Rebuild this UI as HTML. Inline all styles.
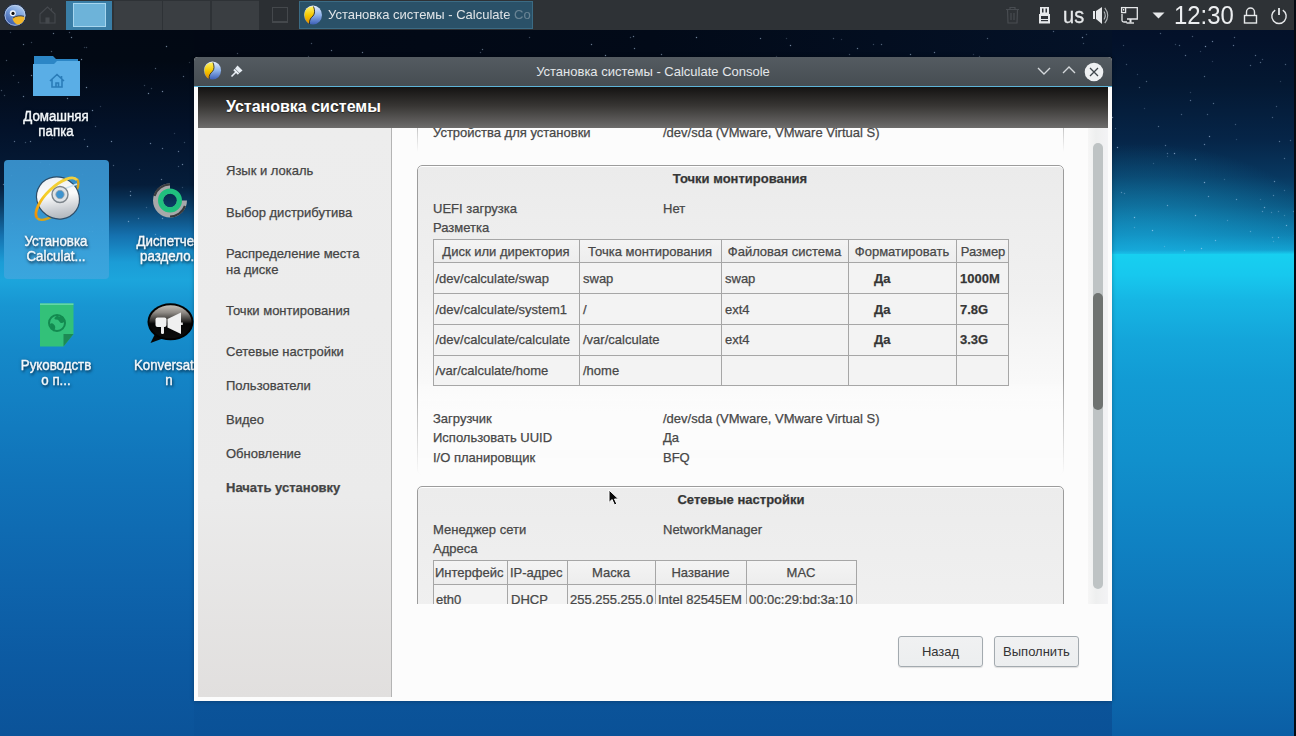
<!DOCTYPE html>
<html><head><meta charset="utf-8">
<style>
*{margin:0;padding:0;box-sizing:border-box}
html,body{width:1296px;height:736px;overflow:hidden;font-family:"Liberation Sans",sans-serif}
body{position:relative;background:#0a4f96}
.abs{position:absolute}
#bg{position:absolute;left:0;top:0;width:1296px;height:736px;
background:linear-gradient(to bottom,#01050c 0px,#02070f 57px,#041832 85px,#062548 140px,#083860 177px,#0b5580 206px,#0e7eae 235px,#12a0cf 250px,#17d0f0 254px,#16c6ed 285px,#13afe0 320px,#119dd6 360px,#1090cf 400px,#0f85c6 460px,#0c6cb2 520px,#0b5ca2 620px,#0b559b 680px,#0a5197 736px)}
#bgL{position:absolute;left:0;top:0;width:194px;height:736px;
background:linear-gradient(to bottom,#020814 0px,#020914 60px,#03122a 130px,#051d3a 185px,#0a3a62 205px,#1572b0 236px,#1b9cd6 262px,#1ca5dc 280px,#1896d2 305px,#1589c9 350px,#1380c3 400px,#1072b8 480px,#0e64ac 580px,#0c5aa2 660px,#0b5399 736px)}
#bgR{position:absolute;left:1112px;top:0;width:184px;height:736px;
background:linear-gradient(to bottom,#030f26 0px,#03112a 40px,#041832 85px,#062548 140px,#083860 177px,#0b5580 206px,#0e7eae 235px,#12a0cf 250px,#17d0f0 254px,#17c8ee 275px,#16b6e4 300px,#14a5da 340px,#129bd4 380px,#1190cc 460px,#0f82c3 540px,#0e74b8 620px,#0c68ad 690px,#0b5ea5 736px)}
#glowR{position:absolute;left:1112px;top:120px;width:184px;height:134px;background:radial-gradient(ellipse 190px 110px at 30px 134px,rgba(25,175,225,.55),rgba(25,175,225,0))}
#taskbar{position:absolute;left:0;top:0;width:1294px;height:30px;background:#2e3236}
.desk{position:absolute;top:1px;height:29px;background:#3a3e42}
.icontext{position:absolute;color:#f4f8fb;font-size:14px;-webkit-text-stroke:0.4px #f4f8fb;text-align:center;line-height:15px;transform:scaleX(0.95);text-shadow:1px 2px 3px rgba(0,20,40,.85),0 0 4px rgba(0,0,0,.35)}
#win{position:absolute;left:194px;top:57px;width:918px;height:644px;background:#fcfcfc;border-radius:4px 4px 0 0;box-shadow:0 0 4px rgba(0,0,0,.3)}
#title{position:absolute;left:0;top:0;width:918px;height:30px;background:linear-gradient(#545b61,#464d52);border-radius:4px 4px 0 0;border-bottom:1px solid #5eb4d8}
#title .t{position:absolute;left:0;width:918px;top:7px;text-align:center;color:#e4e7ea;font-size:13px}
#hdr{position:absolute;left:4px;top:30px;width:910px;height:41px;background:linear-gradient(#141312,#373533 45%,#6d6c6b)}
#hdr .t{position:absolute;left:28px;top:11px;color:#fff;font-size:16px;font-weight:bold;text-shadow:0 1px 1px rgba(0,0,0,.5)}
#side{position:absolute;left:4px;top:71px;width:194px;height:569px;background:linear-gradient(#ededed,#ebebeb 65%,#e1dfde);border-right:1px solid #b4b4b4}
.nav{position:absolute;left:28px;font-size:13px;color:#444;-webkit-text-stroke:0.25px #444;margin-top:1px}
#content{position:absolute;left:198px;top:71px;width:696px;height:476px;overflow:hidden;background:#fcfcfc}
#sbar{position:absolute;left:894px;top:71px;width:20px;height:476px;background:linear-gradient(to right,#f6f6f6,#eeefef 40%,#f3f3f5)}
#sbar .track{position:absolute;left:5px;top:15px;width:10px;height:446px;border-radius:5px;background:#bec3c4}
#sbar .handle{position:absolute;left:5px;top:165px;width:10px;height:117px;border-radius:5px;background:#6f7371}
.lbl{position:absolute;font-size:13px;color:#474747;-webkit-text-stroke:0.25px #474747;white-space:nowrap;line-height:15px}
.grp{position:absolute;border:1px solid #9c9c9c;border-radius:5px;box-shadow:inset 0 1px 0 #fff;background:linear-gradient(#ececec,#efefef 50%,#f3f3f3)}
.g1{background:linear-gradient(#ebebeb,#f0f0f0 40%,#fcfcfc 80%);-webkit-mask-image:linear-gradient(#000 68%,rgba(0,0,0,0) 100%)}
.btn{position:absolute;height:31px;border:1px solid #a3aaaf;border-radius:3px;background:linear-gradient(#f0f1f2,#eceeef);font-size:13px;color:#333;text-align:center;line-height:29px;box-shadow:0 1px 1px rgba(0,0,0,.12)}
</style></head><body>
<div id="bg"></div>
<div id="bgL"></div>
<div id="bgR"></div>
<div id="glowR"></div>
<div class="abs" style="left:194px;top:30px;width:918px;height:27px;background:linear-gradient(to right,#020814,#020a18 50%,#041228)"></div>
<div class="abs" style="left:0;top:0;width:1px;height:1px;box-shadow:29px 167px 1px 0 rgba(200,225,255,0.34),1179px 45px 1px 0 rgba(200,225,255,0.60),84px 47px 1px 0 rgba(200,225,255,0.35),1262px 59px 1px 0 rgba(200,225,255,0.43),1284px 158px 1px 0 rgba(200,225,255,0.54),237px 53px 1px 0 rgba(200,225,255,0.47),23px 96px 1px 0 rgba(200,225,255,0.79),113px 165px 1px 0 rgba(200,225,255,0.52),1123px 45px 1px 0 rgba(200,225,255,0.42),1190px 100px 1px 0 rgba(200,225,255,0.65),1167px 205px 1px 0 rgba(200,225,255,0.72),111px 141px 1px 0 rgba(200,225,255,0.83),1164px 246px 1px 0 rgba(200,225,255,0.37),1250px 65px 1px 0 rgba(200,225,255,0.59),130px 191px 1px 0 rgba(200,225,255,0.64),482px 49px 1px 0 rgba(200,225,255,0.66),1195px 215px 1px 0 rgba(200,225,255,0.87),1233px 45px 1px 0 rgba(200,225,255,0.72),1293px 211px 1px 0 rgba(200,225,255,0.47),1234px 37px 1px 0 rgba(200,225,255,0.58),23px 44px 1px 0 rgba(200,225,255,0.76),48px 113px 1px 0 rgba(200,225,255,0.82),87px 146px 1px 0 rgba(200,225,255,0.83),987px 38px 1px 0 rgba(200,225,255,0.55),1273px 241px 1px 0 rgba(200,225,255,0.39),45px 81px 1px 0 rgba(200,225,255,0.59),1160px 33px 1px 0 rgba(200,225,255,0.55),1215px 240px 1px 0 rgba(200,225,255,0.71),1224px 179px 1px 0 rgba(200,225,255,0.33),910px 54px 1px 0 rgba(200,225,255,0.78),1185px 55px 1px 0 rgba(200,225,255,0.68),13px 75px 1px 0 rgba(200,225,255,0.40),10px 32px 1px 0 rgba(200,225,255,0.39),71px 37px 1px 0 rgba(200,225,255,0.82),1139px 87px 1px 0 rgba(200,225,255,0.51),1134px 217px 1px 0 rgba(200,225,255,0.90),1200px 51px 1px 0 rgba(200,225,255,0.36),51px 204px 1px 0 rgba(200,225,255,0.40),184px 142px 1px 0 rgba(200,225,255,0.39),1117px 147px 1px 0 rgba(200,225,255,0.89),833px 38px 1px 0 rgba(200,225,255,0.52),150px 143px 1px 0 rgba(200,225,255,0.77),43px 201px 1px 0 rgba(200,225,255,0.89),934px 52px 1px 0 rgba(200,225,255,0.74),100px 106px 1px 0 rgba(200,225,255,0.32),54px 86px 1px 0 rgba(200,225,255,0.72),605px 55px 1px 0 rgba(200,225,255,0.89),529px 37px 1px 0 rgba(200,225,255,0.44),40px 162px 1px 0 rgba(200,225,255,0.84),634px 48px 1px 0 rgba(200,225,255,0.78),128px 221px 1px 0 rgba(200,225,255,0.77),633px 36px 1px 0 rgba(200,225,255,0.77),155px 234px 1px 0 rgba(200,225,255,0.54),1284px 190px 1px 0 rgba(200,225,255,0.40),29px 220px 1px 0 rgba(200,225,255,0.78),160px 236px 1px 0 rgba(200,225,255,0.69),1212px 61px 1px 0 rgba(200,225,255,0.31),790px 45px 1px 0 rgba(200,225,255,0.86),1271px 212px 1px 0 rgba(200,225,255,0.43),57px 82px 1px 0 rgba(200,225,255,0.65),81px 59px 1px 0 rgba(200,225,255,0.85),1195px 159px 1px 0 rgba(200,225,255,0.84),1279px 141px 1px 0 rgba(200,225,255,0.62),1115px 128px 1px 0 rgba(200,225,255,0.41),155px 68px 1px 0 rgba(200,225,255,0.58),1213px 103px 1px 0 rgba(200,225,255,0.61),1255px 55px 1px 0 rgba(200,225,255,0.64),54px 193px 1px 0 rgba(200,225,255,0.60),1250px 231px 1px 0 rgba(200,225,255,0.57),1204px 144px 1px 0 rgba(200,225,255,0.72),1209px 136px 1px 0 rgba(200,225,255,0.86),1272px 237px 1px 0 rgba(200,225,255,0.46),1284px 215px 1px 0 rgba(200,225,255,0.38),86px 47px 1px 0 rgba(200,225,255,0.44),130px 195px 1px 0 rgba(200,225,255,0.84),139px 169px 1px 0 rgba(200,225,255,0.39),1082px 37px 1px 0 rgba(200,225,255,0.87),1201px 248px 1px 0 rgba(200,225,255,0.80),84px 139px 1px 0 rgba(200,225,255,0.50),62px 182px 1px 0 rgba(200,225,255,0.31),1192px 36px 1px 0 rgba(200,225,255,0.50),1205px 46px 1px 0 rgba(200,225,255,0.89),1086px 34px 1px 0 rgba(200,225,255,0.46),151px 88px 1px 0 rgba(200,225,255,0.38),1278px 211px 1px 0 rgba(200,225,255,0.46),178px 151px 1px 0 rgba(200,225,255,0.72),11px 175px 1px 0 rgba(200,225,255,0.56),182px 164px 1px 0 rgba(200,225,255,0.78),166px 46px 1px 0 rgba(200,225,255,0.82),1174px 153px 1px 0 rgba(200,225,255,0.86),25px 142px 1px 0 rgba(200,225,255,0.44),31px 42px 1px 0 rgba(200,225,255,0.42),59px 190px 1px 0 rgba(200,225,255,0.47),1144px 108px 1px 0 rgba(200,225,255,0.31),3px 184px 1px 0 rgba(200,225,255,0.63),92px 226px 1px 0 rgba(200,225,255,0.36),591px 44px 1px 0 rgba(200,225,255,0.80),1204px 182px 1px 0 rgba(200,225,255,0.89),161px 179px 1px 0 rgba(200,225,255,0.68),1175px 44px 1px 0 rgba(200,225,255,0.38),144px 85px 1px 0 rgba(200,225,255,0.40),163px 213px 1px 0 rgba(200,225,255,0.70),47px 93px 1px 0 rgba(200,225,255,0.58),86px 87px 1px 0 rgba(200,225,255,0.88),696px 37px 1px 0 rgba(200,225,255,0.88),69px 32px 1px 0 rgba(200,225,255,0.53),1204px 76px 1px 0 rgba(200,225,255,0.60),51px 51px 1px 0 rgba(200,225,255,0.54),4px 95px 1px 0 rgba(200,225,255,0.44),1208px 196px 1px 0 rgba(200,225,255,0.69),1272px 117px 1px 0 rgba(200,225,255,0.50),331px 50px 1px 0 rgba(200,225,255,0.69),162px 218px 1px 0 rgba(200,225,255,0.68),1260px 62px 1px 0 rgba(200,225,255,0.61),1264px 207px 1px 0 rgba(200,225,255,0.80),1274px 181px 1px 0 rgba(200,225,255,0.72),6px 60px 1px 0 rgba(200,225,255,0.52),162px 148px 1px 0 rgba(200,225,255,0.68),1236px 139px 1px 0 rgba(200,225,255,0.30),881px 44px 1px 0 rgba(200,225,255,0.62),1124px 193px 1px 0 rgba(200,225,255,0.45),52px 184px 1px 0 rgba(200,225,255,0.42),1290px 140px 1px 0 rgba(200,225,255,0.53),1236px 199px 1px 0 rgba(200,225,255,0.67),1126px 64px 1px 0 rgba(200,225,255,0.45),1167px 156px 1px 0 rgba(200,225,255,0.31),52px 172px 1px 0 rgba(200,225,255,0.72),1165px 145px 1px 0 rgba(200,225,255,0.58),1134px 227px 1px 0 rgba(200,225,255,0.42),1053px 31px 1px 0 rgba(200,225,255,0.58),1083px 43px 1px 0 rgba(200,225,255,0.46),183px 76px 1px 0 rgba(200,225,255,0.65),102px 230px 1px 0 rgba(200,225,255,0.38),661px 54px 1px 0 rgba(200,225,255,0.72),174px 133px 1px 0 rgba(200,225,255,0.31),95px 126px 1px 0 rgba(200,225,255,0.48),67px 98px 1px 0 rgba(200,225,255,0.80),146px 207px 1px 0 rgba(200,225,255,0.37),849px 54px 1px 0 rgba(200,225,255,0.47),1184px 250px 1px 0 rgba(200,225,255,0.65),1190px 92px 1px 0 rgba(200,225,255,0.33),162px 91px 1px 0 rgba(200,225,255,0.86),52px 138px 1px 0 rgba(200,225,255,0.41),1286px 225px 1px 0 rgba(200,225,255,0.79),1278px 237px 1px 0 rgba(200,225,255,0.63),1121px 192px 1px 0 rgba(200,225,255,0.57),786px 38px 1px 0 rgba(200,225,255,0.33),311px 43px 1px 0 rgba(200,225,255,0.51),143px 235px 1px 0 rgba(200,225,255,0.46),1167px 153px 1px 0 rgba(200,225,255,0.54),31px 75px 1px 0 rgba(200,225,255,0.84),1152px 230px 1px 0 rgba(200,225,255,0.90),1137px 74px 1px 0 rgba(200,225,255,0.35),18px 82px 1px 0 rgba(200,225,255,0.46),1273px 195px 1px 0 rgba(200,225,255,0.55),1207px 114px 1px 0 rgba(200,225,255,0.50),54px 233px 1px 0 rgba(200,225,255,0.38),1227px 220px 1px 0 rgba(200,225,255,0.43),48px 115px 1px 0 rgba(200,225,255,0.57),973px 54px 1px 0 rgba(200,225,255,0.31),138px 218px 1px 0 rgba(200,225,255,0.58),1112px 117px 1px 0 rgba(200,225,255,0.86),979px 56px 1px 0 rgba(200,225,255,0.45),30px 141px 1px 0 rgba(200,225,255,0.71),857px 48px 1px 0 rgba(200,225,255,0.76),1212px 41px 1px 0 rgba(200,225,255,0.77),178px 166px 1px 0 rgba(200,225,255,0.48),49px 164px 1px 0 rgba(200,225,255,0.72),14px 141px 1px 0 rgba(200,225,255,0.65),1153px 163px 1px 0 rgba(200,225,255,0.31),89px 231px 1px 0 rgba(200,225,255,0.69),630px 37px 1px 0 rgba(200,225,255,0.45),841px 39px 1px 0 rgba(200,225,255,0.31),1235px 124px 1px 0 rgba(200,225,255,0.45),1280px 81px 1px 0 rgba(200,225,255,0.32),82px 174px 1px 0 rgba(200,225,255,0.42),873px 44px 1px 0 rgba(200,225,255,0.42),480px 52px 1px 0 rgba(200,225,255,0.44),148px 93px 1px 0 rgba(200,225,255,0.87),1146px 81px 1px 0 rgba(200,225,255,0.55),1285px 64px 1px 0 rgba(200,225,255,0.54),189px 62px 1px 0 rgba(200,225,255,0.33),76px 219px 1px 0 rgba(200,225,255,0.83),1294px 235px 1px 0 rgba(200,225,255,0.50),182px 187px 1px 0 rgba(200,225,255,0.32),1181px 114px 1px 0 rgba(200,225,255,0.50),1px 90px 1px 0 rgba(200,225,255,0.51),308px 56px 1px 0 rgba(200,225,255,0.42),1262px 211px 1px 0 rgba(200,225,255,0.56),92px 110px 1px 0 rgba(200,225,255,0.85),71px 219px 1px 0 rgba(200,225,255,0.32),1260px 199px 1px 0 rgba(200,225,255,0.32),12px 223px 1px 0 rgba(200,225,255,0.45),1276px 106px 1px 0 rgba(200,225,255,0.46),760px 38px 1px 0 rgba(200,225,255,0.73),53px 33px 1px 0 rgba(200,225,255,0.75),776px 56px 1px 0 rgba(200,225,255,0.31),92px 231px 1px 0 rgba(200,225,255,0.87),1158px 126px 1px 0 rgba(200,225,255,0.60),362px 52px 1px 0 rgba(200,225,255,0.74)"></div>

<div id="taskbar">
  <svg class="abs" style="left:3px;top:3px" width="24" height="25" viewBox="0 0 24 25">
   <defs><linearGradient id="lg" x1=".8" y1="0" x2=".2" y2="1"><stop offset="0" stop-color="#b9d4f4"/><stop offset=".5" stop-color="#6d95d6"/><stop offset="1" stop-color="#2f4f9e"/></linearGradient></defs>
   <circle cx="12" cy="12.3" r="11" fill="url(#lg)" stroke="#1c2a44" stroke-width="1"/>
   <circle cx="12" cy="12.3" r="10" fill="none" stroke="#c9d6ea" stroke-width=".7"/>
   <circle cx="9.8" cy="10.2" r="3" fill="#f4f6fa"/><circle cx="10" cy="10.4" r="1.6" fill="#0d0d0d"/>
   <path d="M9.5 15.5 C12 13 17 12.5 21.5 13.8 C22 17.5 19 21.5 14.5 21.5 C11.5 20.5 10 18 9.5 15.5Z" fill="#f0b52a"/>
   <path d="M10 15 C13 12.8 17 12.3 21 13.3" fill="none" stroke="#2a2a2a" stroke-width=".8"/>
  </svg>
  <svg class="abs" style="left:39px;top:6px" width="17" height="18" viewBox="0 0 17 18" fill="none" stroke="#45494e" stroke-width="1.1">
   <path d="M1 17 V8 L8.5 1 L16 8 V17 Z M12.5 4.5 V2"/><rect x="7" y="12" width="3" height="5" fill="#45494e"/>
  </svg>
  <div class="desk" style="left:66px;width:46px;background:#3a7ea6"><div class="abs" style="left:7px;top:2px;width:33px;height:24px;background:#6db3d9;border:1px solid #a6d6ef"></div></div>
  <div class="desk" style="left:114px;width:48px"></div>
  <div class="desk" style="left:163px;width:47px"></div>
  <div class="desk" style="left:212px;width:47px"></div>
  <div class="abs" style="left:259px;top:0px;width:40px;height:30px;background:#2b2f33"></div>
  <div class="abs" style="left:272px;top:7px;width:16px;height:16px;border:1px solid #44484c;border-bottom:2px solid #44484c"></div>
  <div class="abs" style="left:299px;top:1px;width:234px;height:28px;background:#2a5168;border:1px solid #3b6b84"></div>
  <svg class="abs" style="left:303px;top:5px" width="20" height="20" viewBox="0 0 20 20">
<defs><linearGradient id="cy303" x1="0" y1="0" x2="0" y2="1"><stop offset="0" stop-color="#fff36a"/><stop offset=".5" stop-color="#f5c800"/><stop offset="1" stop-color="#e08a00"/></linearGradient>
<linearGradient id="cb303" x1="0" y1="0" x2="0" y2="1"><stop offset="0" stop-color="#e8f0ff"/><stop offset=".5" stop-color="#8fb3ea"/><stop offset="1" stop-color="#3c5fb8"/></linearGradient></defs>
<ellipse cx="10" cy="10" rx="9" ry="9.5" fill="url(#cb303)"/>
<path d="M10.5 1.5 C5 1 1.5 5 1.5 10 C1.5 14 3.5 17.5 6.5 19 C6 15 8 12.5 10 11 C12 9 12 5 10.5 1.5Z" fill="url(#cy303)"/>
<path d="M10.5 1.5 C12 5 12 9 10 11 C8 12.5 6 15 6.5 19" fill="none" stroke="#2a2a20" stroke-width=".9"/>
</svg>
  <div class="abs" style="left:328px;top:7px;font-size:13px;color:#e1e5e8;white-space:nowrap;width:204px;overflow:hidden;-webkit-mask-image:linear-gradient(to right,#000 179px,rgba(0,0,0,.35) 186px)">Установка системы - Calculate Co</div>

  <svg class="abs" style="left:1005px;top:6px" width="15" height="18" viewBox="0 0 15 18" fill="none" stroke="#484c51" stroke-width="1.2">
   <path d="M1 3.5 H14 M5 3.5 V1.5 H10 V3.5 M2.5 3.5 L3 17 H12 L12.5 3.5 M6 7 V14 M9 7 V14"/>
  </svg>
  <svg class="abs" style="left:1038px;top:6px" width="13" height="18" viewBox="0 0 13 18">
   <rect x="2" y="1" width="9" height="7" fill="#e6e8ea"/><rect x="4" y="2.5" width="1.5" height="4" fill="#2f3338"/><rect x="7.5" y="2.5" width="1.5" height="4" fill="#2f3338"/>
   <rect x="1" y="8" width="11" height="9.5" fill="#e6e8ea"/><rect x="3" y="10" width="7" height="3" fill="#2f3338"/><rect x="3" y="14" width="7" height="1.2" fill="#2f3338"/>
  </svg>
  <div class="abs" style="left:1063px;top:3px;font-size:22px;color:#e6e8ea;-webkit-text-stroke:0.3px #e6e8ea;transform:scaleX(0.91);transform-origin:0 0">us</div>
  <svg class="abs" style="left:1092px;top:6px" width="18" height="19" viewBox="0 0 18 19">
   <rect x="1" y="5" width="2" height="8" fill="#e6e8ea"/><path d="M4 5 L10 1 V18 L4 13 Z" fill="#e6e8ea"/>
   <path d="M12 5.5 Q14.5 9.5 12 13.5" fill="none" stroke="#b8bcbf" stroke-width="1.1"/>
   <path d="M12.8 1.8 Q18.6 9.5 12.8 17.2" fill="none" stroke="#aeb2b5" stroke-width="1.1"/>
  </svg>
  <svg class="abs" style="left:1120px;top:6px" width="19" height="19" viewBox="0 0 19 19" fill="none" stroke="#e6e8ea" stroke-width="1.3">
   <rect x="1.6" y="1.6" width="4" height="5"/><rect x="3" y="3" width="1.2" height="1.6" fill="#e6e8ea" stroke="none"/><path d="M2 8 V14.5 Q2 16 4 16 H7"/>
   <path d="M6 1.6 H17.3 V13 H7"/><path d="M10.5 13 V16.5" stroke-width="2"/><path d="M6.5 17 H14" stroke-width="1.4"/>
  </svg>
  <svg class="abs" style="left:1152px;top:12px" width="13" height="7" viewBox="0 0 13 7"><path d="M0.5 0.5 H12.5 L6.5 6.5Z" fill="#e6e8ea"/></svg>
  <div class="abs" style="left:1174px;top:0px;font-size:26px;color:#eceef0;transform:scaleX(0.92);transform-origin:0 0">12:30</div>
  <svg class="abs" style="left:1243px;top:7px" width="15" height="17" viewBox="0 0 15 17" fill="none" stroke="#e6e8ea" stroke-width="1.4">
   <path d="M3.5 8 V5 A4 4 0 0 1 11.5 5 V8"/><rect x="1.5" y="8.5" width="12" height="7.5"/>
  </svg>
  <svg class="abs" style="left:1270px;top:7px" width="18" height="18" viewBox="0 0 18 18" fill="none" stroke="#e6e8ea" stroke-width="1.4">
   <path d="M5.2 3.2 A7.2 7.2 0 1 0 12.8 3.2"/><path d="M9 1 V8" stroke-width="1.8"/>
  </svg>
</div>
<div class="abs" style="left:1294px;top:0;width:2px;height:736px;background:#050a12"></div>


<div class="abs" style="left:4px;top:160px;width:105px;height:119px;border-radius:4px;background:linear-gradient(rgba(58,148,208,.94),rgba(60,166,222,.92))"></div>
<svg class="abs" style="left:33px;top:55px" width="48" height="42" viewBox="0 0 48 42">
 <path d="M1 1 H20 L23 4 H45 V12 H1Z" fill="#2c86c6"/>
 <path d="M0 9 H21 L24 6 H47 V41 H0Z" fill="#5aaee6"/>
 <path d="M17 26 L24 19.5 L31 26 M19 24.5 V32 H29 V24.5 M23 32 V28 H25.5 V32 M28.5 21 V23.5" fill="none" stroke="#2a7cb8" stroke-width="1.6"/>
</svg>
<svg class="abs" style="left:31px;top:172px" width="52" height="50" viewBox="0 0 52 50">
 <defs><linearGradient id="cd" x1="0" y1="0" x2="1" y2="1"><stop offset="0" stop-color="#e9ecef"/><stop offset=".45" stop-color="#fbfbfb"/><stop offset=".7" stop-color="#c9cdd2"/><stop offset="1" stop-color="#9aa0a6"/></linearGradient>
 <linearGradient id="rg" x1="0" y1="1" x2="1" y2="0"><stop offset="0" stop-color="#f08c00"/><stop offset=".4" stop-color="#f5cf2a"/><stop offset="1" stop-color="#f0d040"/></linearGradient></defs>
 <path d="M46 7 A27 11 -45 0 1 6 46" fill="none" stroke="#d9a418" stroke-width="2.4"/>
 <ellipse cx="27" cy="26" rx="22" ry="20.5" transform="rotate(35 27 26)" fill="url(#cd)" stroke="#2d4e6a" stroke-width="1.2"/>
 <path d="M30 18 L46 12" stroke="#cfe3f0" stroke-width="1.5"/>
 <circle cx="29" cy="22.5" r="8" fill="#dfe3e7" stroke="#7d858c" stroke-width="1.4"/>
 <circle cx="29" cy="22.5" r="4.2" fill="#3d93cf" stroke="#9aa2a8" stroke-width=".8"/>
 <path d="M46 8 A27 11 -45 0 0 6 46" fill="none" stroke="url(#rg)" stroke-width="2.8"/>
</svg>
<svg class="abs" style="left:148px;top:180px" width="44" height="42" viewBox="0 0 44 42">
 <path d="M22 3.5 A17 17 0 1 0 39 20.5 H29 A7 7 0 1 1 22 13.5Z" fill="#a7a8aa"/>
 <path d="M22 4.5 A16 16 0 0 0 6.5 16" fill="none" stroke="#3c3d40" stroke-width="2.2"/>
 <path d="M22 36.5 A16 16 0 0 0 37 26" fill="none" stroke="#37383b" stroke-width="2.2"/>
 <circle cx="22" cy="20.5" r="9.4" fill="none" stroke="#20c07e" stroke-width="5.2"/>
</svg>
<svg class="abs" style="left:40px;top:303px" width="34" height="44" viewBox="0 0 34 44">
 <path d="M0 0.5 H33.5 V31 L23.5 43.5 H0Z" fill="#33c179"/>
 <rect x="0" y="0.5" width="33.5" height="1.3" fill="#6fdcb0"/>
 <path d="M23.5 31 H33.5 L23.5 43.5Z" fill="#1d8a55"/>
 <circle cx="17" cy="20" r="8" fill="none" stroke="#138a50" stroke-width="2"/>
 <path d="M10 21 C12 19 14 21 15 23 C16 25 14 27 14 28.5 C12 27 10 24 10 21Z M17 12.5 C16 14 14 14.5 14.5 16 C16 17 18 16 19 18 C20 20 22 21 24 19 C25 17 24 14 22 13 C21 14.5 19 14 17 12.5Z" fill="#138a50"/>
</svg>
<svg class="abs" style="left:146px;top:302px" width="50" height="46" viewBox="0 0 50 46">
 <defs><linearGradient id="kb" x1="0" y1="0" x2="0" y2="1"><stop offset="0" stop-color="#c2bdb6"/><stop offset=".22" stop-color="#8f8a85"/><stop offset=".48" stop-color="#2c2a28"/><stop offset=".56" stop-color="#050505"/><stop offset="1" stop-color="#0c0c0c"/></linearGradient></defs>
 <path d="M9 32 L4.5 41 L18 36Z" fill="#060606"/>
 <ellipse cx="24.5" cy="19.8" rx="23" ry="18.5" fill="#020202"/>
 <ellipse cx="24.5" cy="19.8" rx="21" ry="16.5" fill="url(#kb)"/>
 <rect x="9.5" y="15.5" width="11" height="9.5" rx="2" fill="#f0f0f0"/>
 <rect x="15" y="24" width="3" height="8" rx="1.3" fill="#ececec"/>
 <path d="M21.5 17 L35 10.5 V32 L21.5 25.5 Z" fill="#f0f0f0"/>
 <rect x="35" y="20.5" width="1.8" height="2.5" fill="#ddd"/>
</svg>
<div class="icontext" style="left:5px;top:109px;width:102px">Домашняя<br>папка</div>
<div class="icontext" style="left:5px;top:234px;width:102px">Установка<br>Calculat...</div>
<div class="icontext" style="left:5px;top:358px;width:102px">Руководств<br>о п...</div>
<div class="icontext" style="left:118px;top:234px;width:102px">Диспетчер<br>&nbsp;раздело...</div>
<div class="icontext" style="left:115px;top:358px;width:108px">Konversatio<br>n</div>


<div id="win">
  <div id="title"><div class="t">Установка системы - Calculate Console</div>
   <svg class="abs" style="left:9px;top:4px" width="19" height="19" viewBox="0 0 20 20">
<defs><linearGradient id="cy9" x1="0" y1="0" x2="0" y2="1"><stop offset="0" stop-color="#fff36a"/><stop offset=".5" stop-color="#f5c800"/><stop offset="1" stop-color="#e08a00"/></linearGradient>
<linearGradient id="cb9" x1="0" y1="0" x2="0" y2="1"><stop offset="0" stop-color="#e8f0ff"/><stop offset=".5" stop-color="#8fb3ea"/><stop offset="1" stop-color="#3c5fb8"/></linearGradient></defs>
<ellipse cx="10" cy="10" rx="9" ry="9.5" fill="url(#cb9)"/>
<path d="M10.5 1.5 C5 1 1.5 5 1.5 10 C1.5 14 3.5 17.5 6.5 19 C6 15 8 12.5 10 11 C12 9 12 5 10.5 1.5Z" fill="url(#cy9)"/>
<path d="M10.5 1.5 C12 5 12 9 10 11 C8 12.5 6 15 6.5 19" fill="none" stroke="#2a2a20" stroke-width=".9"/>
</svg>
   <svg class="abs" style="left:36px;top:7px" width="14" height="14" viewBox="0 0 14 14">
    <path d="M7.5 1.5 L12.5 6.5 L9.5 9 L5 4.5Z" fill="#e8eef4"/><path d="M4 5.5 L8.5 10" stroke="#e8eef4" stroke-width="2"/><path d="M6 8 L1.5 12.5" stroke="#e8eef4" stroke-width="1.6"/>
   </svg>
   <svg class="abs" style="left:843px;top:9px" width="14" height="10" viewBox="0 0 14 10"><path d="M1 2 L7 8 L13 2" fill="none" stroke="#d4d8db" stroke-width="1.4"/></svg>
   <svg class="abs" style="left:868px;top:8px" width="14" height="10" viewBox="0 0 14 10"><path d="M1 8 L7 2 L13 8" fill="none" stroke="#d4d8db" stroke-width="1.4"/></svg>
   <svg class="abs" style="left:890px;top:5px" width="20" height="20" viewBox="0 0 20 20"><circle cx="10" cy="10" r="9.3" fill="#eef0f2"/><path d="M6 6 L14 14 M14 6 L6 14" stroke="#3f454b" stroke-width="1.3"/></svg>
  </div>
  <div id="hdr"><div class="t">Установка системы</div></div>
  <div id="side">
    <div class="nav" style="top:34px">Язык и локаль</div>
    <div class="nav" style="top:76px">Выбор дистрибутива</div>
    <div class="nav" style="top:117px;line-height:16px">Распределение места<br>на диске</div>
    <div class="nav" style="top:174px">Точки монтирования</div>
    <div class="nav" style="top:215px">Сетевые настройки</div>
    <div class="nav" style="top:249px">Пользователи</div>
    <div class="nav" style="top:283px">Видео</div>
    <div class="nav" style="top:317px">Обновление</div>
    <div class="nav" style="top:351px;font-weight:bold">Начать установку</div>
  </div>
  <div id="content">
<div class="abs" style="left:25px;top:0;width:1px;height:24px;background:linear-gradient(#c4c4c4,rgba(220,220,220,0))"></div>
<div class="abs" style="left:671px;top:0;width:1px;height:24px;background:linear-gradient(#c4c4c4,rgba(220,220,220,0))"></div>
<div class="lbl" style="left:41px;top:-3px;">Устройства для установки</div>
<div class="lbl" style="left:271px;top:-3px;">/dev/sda (VMware, VMware Virtual S)</div>
<div class="grp g1" style="left:25px;top:37px;width:647px;height:310px"></div>
<div class="lbl" style="left:198px;width:300px;text-align:center;top:43px;font-weight:bold;color:#333">Точки монтирования</div>
<div class="lbl" style="left:41px;top:73px;">UEFI загрузка</div>
<div class="lbl" style="left:271px;top:73px;">Нет</div>
<div class="lbl" style="left:41px;top:92px;">Разметка</div>
<div class="abs" style="left:41px;top:111px;width:575px;height:23px;background:linear-gradient(#f4f4f4,#ededed)"></div>
<div class="abs" style="left:41px;top:134px;width:575px;height:123px;background:#f3f3f3"></div>
<div class="abs" style="left:41px;top:111px;width:576px;height:1px;background:#a6a6a6"></div>
<div class="abs" style="left:41px;top:134px;width:576px;height:1px;background:#a6a6a6"></div>
<div class="abs" style="left:41px;top:165px;width:576px;height:1px;background:#a6a6a6"></div>
<div class="abs" style="left:41px;top:196px;width:576px;height:1px;background:#a6a6a6"></div>
<div class="abs" style="left:41px;top:227px;width:576px;height:1px;background:#a6a6a6"></div>
<div class="abs" style="left:41px;top:257px;width:576px;height:1px;background:#a6a6a6"></div>
<div class="abs" style="left:41px;top:111px;width:1px;height:147px;background:#a6a6a6"></div>
<div class="abs" style="left:187px;top:111px;width:1px;height:147px;background:#a6a6a6"></div>
<div class="abs" style="left:329px;top:111px;width:1px;height:147px;background:#a6a6a6"></div>
<div class="abs" style="left:456px;top:111px;width:1px;height:147px;background:#a6a6a6"></div>
<div class="abs" style="left:564px;top:111px;width:1px;height:147px;background:#a6a6a6"></div>
<div class="abs" style="left:616px;top:111px;width:1px;height:147px;background:#a6a6a6"></div>
<div class="lbl" style="left:-36.0px;width:300px;text-align:center;top:115.5px;">Диск или директория</div>
<div class="lbl" style="left:108.0px;width:300px;text-align:center;top:115.5px;">Точка монтирования</div>
<div class="lbl" style="left:242.5px;width:300px;text-align:center;top:115.5px;">Файловая система</div>
<div class="lbl" style="left:360.0px;width:300px;text-align:center;top:115.5px;">Форматировать</div>
<div class="lbl" style="left:441.0px;width:300px;text-align:center;top:115.5px;">Размер</div>
<div class="lbl" style="left:43.5px;top:143px;">/dev/calculate/swap</div>
<div class="lbl" style="left:191px;top:143px;">swap</div>
<div class="lbl" style="left:333px;top:143px;">swap</div>
<div class="lbl" style="left:482px;top:143px;font-weight:bold;color:#333">Да</div>
<div class="lbl" style="left:568px;top:143px;font-weight:bold;color:#333">1000M</div>
<div class="lbl" style="left:43.5px;top:173.5px;">/dev/calculate/system1</div>
<div class="lbl" style="left:191px;top:173.5px;">/</div>
<div class="lbl" style="left:333px;top:173.5px;">ext4</div>
<div class="lbl" style="left:482px;top:173.5px;font-weight:bold;color:#333">Да</div>
<div class="lbl" style="left:568px;top:173.5px;font-weight:bold;color:#333">7.8G</div>
<div class="lbl" style="left:43.5px;top:204px;">/dev/calculate/calculate</div>
<div class="lbl" style="left:191px;top:204px;">/var/calculate</div>
<div class="lbl" style="left:333px;top:204px;">ext4</div>
<div class="lbl" style="left:482px;top:204px;font-weight:bold;color:#333">Да</div>
<div class="lbl" style="left:568px;top:204px;font-weight:bold;color:#333">3.3G</div>
<div class="lbl" style="left:43.5px;top:234.5px;">/var/calculate/home</div>
<div class="lbl" style="left:191px;top:234.5px;">/home</div>
<div class="lbl" style="left:333px;top:234.5px;"></div>
<div class="lbl" style="left:41px;top:283.3px;">Загрузчик</div>
<div class="lbl" style="left:271px;top:283.3px;">/dev/sda (VMware, VMware Virtual S)</div>
<div class="lbl" style="left:41px;top:302.4px;">Использовать UUID</div>
<div class="lbl" style="left:271px;top:302.4px;">Да</div>
<div class="lbl" style="left:41px;top:321.5px;">I/O планировщик</div>
<div class="lbl" style="left:271px;top:321.5px;">BFQ</div>
<div class="grp" style="left:25px;top:358px;width:647px;height:200px"></div>
<div class="lbl" style="left:199px;width:300px;text-align:center;top:364px;font-weight:bold;color:#333">Сетевые настройки</div>
<div class="lbl" style="left:41px;top:393.70000000000005px;">Менеджер сети</div>
<div class="lbl" style="left:271px;top:393.70000000000005px;">NetworkManager</div>
<div class="lbl" style="left:41px;top:413px;">Адреса</div>
<div class="abs" style="left:41px;top:432px;width:423px;height:24px;background:linear-gradient(#f4f4f4,#ededed)"></div>
<div class="abs" style="left:41px;top:456px;width:423px;height:40px;background:#f3f3f3"></div>
<div class="abs" style="left:41px;top:432px;width:424px;height:1px;background:#a6a6a6"></div>
<div class="abs" style="left:41px;top:456px;width:424px;height:1px;background:#a6a6a6"></div>
<div class="abs" style="left:41px;top:432px;width:1px;height:61px;background:#a6a6a6"></div>
<div class="abs" style="left:115px;top:432px;width:1px;height:61px;background:#a6a6a6"></div>
<div class="abs" style="left:175px;top:432px;width:1px;height:61px;background:#a6a6a6"></div>
<div class="abs" style="left:263px;top:432px;width:1px;height:61px;background:#a6a6a6"></div>
<div class="abs" style="left:354px;top:432px;width:1px;height:61px;background:#a6a6a6"></div>
<div class="abs" style="left:464px;top:432px;width:1px;height:61px;background:#a6a6a6"></div>
<div class="lbl" style="left:43px;top:437px;width:70px;overflow:hidden">Интерфейс</div>
<div class="lbl" style="left:118px;top:437px;width:56px;overflow:hidden">IP-адрес</div>
<div class="lbl" style="left:69px;width:300px;text-align:center;top:437px;">Маска</div>
<div class="lbl" style="left:158.5px;width:300px;text-align:center;top:437px;">Название</div>
<div class="lbl" style="left:259px;width:300px;text-align:center;top:437px;">MAC</div>
<div class="lbl" style="left:44px;top:463.79999999999995px;">eth0</div>
<div class="lbl" style="left:119px;top:463.79999999999995px;">DHCP</div>
<div class="lbl" style="left:178px;top:463.79999999999995px;">255.255.255.0</div>
<div class="lbl" style="left:266px;top:463.79999999999995px;">Intel 82545EM</div>
<div class="lbl" style="left:357px;top:463.79999999999995px;">00:0c:29:bd:3a:10</div>
  </div>
  <div id="sbar"><div class="track"></div><div class="handle"></div></div>
  <div class="btn" style="left:704px;top:579px;width:85px">Назад</div>
  <div class="btn" style="left:800px;top:579px;width:85px">Выполнить</div>
</div>
<svg class="abs" style="left:608px;top:489px" width="13" height="21" viewBox="0 0 13 21">
 <path d="M1 1 V13.5 L4 10.5 L6.5 16 L8.8 15 L6.5 10 H10.5Z" fill="#080808" stroke="#fff" stroke-width="1" stroke-linejoin="round"/>
</svg>

</body></html>
